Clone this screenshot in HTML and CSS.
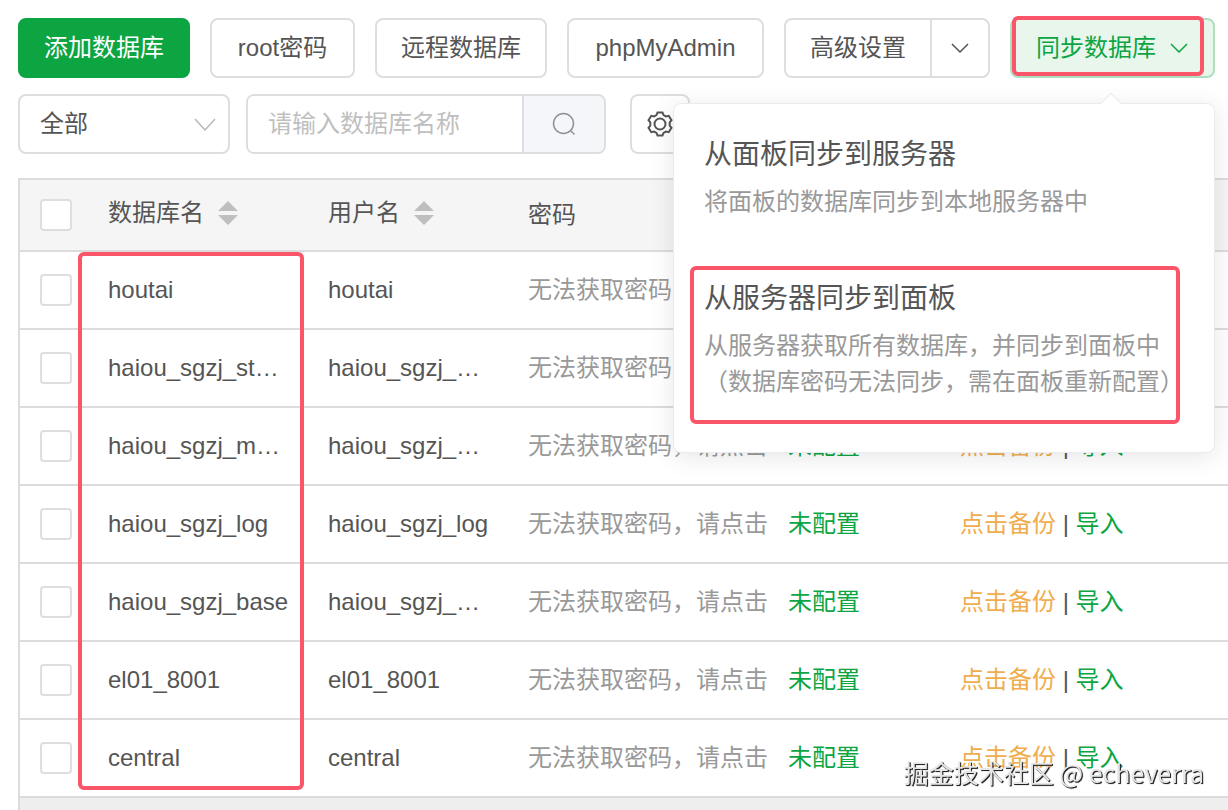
FILE: index.html
```html
<!DOCTYPE html>
<html lang="zh-CN">
<head>
<meta charset="utf-8">
<meta name="viewport" content="width=device-width, initial-scale=1">
<title>数据库</title>
<link rel="stylesheet" href="styles.css">
</head>
<body>
<main class="page">
  <div class="toolbar">
    <button class="btn btn-primary" type="button">添加数据库</button>
    <button class="btn btn-root" type="button">root密码</button>
    <button class="btn" type="button">远程数据库</button>
    <button class="btn btn-admin" type="button">phpMyAdmin</button>
    <div class="split">
      <button class="btn split-main" type="button">高级设置</button>
      <button class="btn split-toggle" type="button" aria-label="更多高级设置">
        <svg class="chevron" viewBox="0 0 18 10" aria-hidden="true"><path d="M1 1l8 8 8-8"/></svg>
      </button>
    </div>
    <div class="dropdown">
      <button class="btn btn-sync" type="button" aria-haspopup="true" aria-expanded="true">
        同步数据库
        <svg class="chevron" viewBox="0 0 18 10" aria-hidden="true"><path d="M1 1l8 8 8-8"/></svg>
      </button>
      <span class="mark mark-sync"></span>
      <div class="popover">
        <button class="option" type="button">
          <span class="option-title">从面板同步到服务器</span>
          <span class="option-desc">将面板的数据库同步到本地服务器中</span>
        </button>
        <button class="option" type="button">
          <span class="option-title">从服务器同步到面板</span>
          <span class="option-desc">从服务器获取所有数据库，并同步到面板中<br>（数据库密码无法同步，需在面板重新配置）</span>
          <span class="mark mark-option"></span>
        </button>
      </div>
    </div>
  </div>

  <div class="filters">
    <div class="select">
      <select aria-label="数据库类型"><option>全部</option></select>
      <svg class="select-arrow" viewBox="0 0 22 13" aria-hidden="true"><path d="M1 1l10 11 10-11"/></svg>
    </div>
    <div class="search">
      <input type="text" aria-label="数据库名称" placeholder="请输入数据库名称">
      <button class="search-btn" type="button" aria-label="搜索">
        <svg viewBox="0 0 24 24" aria-hidden="true"><circle cx="11.500" cy="11.500" r="10"/><path d="M18.500 18.500l4 4"/></svg>
      </button>
    </div>
    <button class="btn gear" type="button" aria-label="设置">
      <svg viewBox="0 0 26 26" aria-hidden="true"><path d="M9.500 4L10.500 1.500H15.500L16.500 4L19 5.400L21.700 4.800L24.500 9.200L22.700 11.400V14.600L24.500 16.800L21.700 21.200L19 20.600L16.500 22L15.500 24.500H10.500L9.500 22L7 20.600L4.300 21.200L1.500 16.800L3.300 14.600V11.400L1.500 9.200L4.300 4.800L7 5.400Z"/><circle cx="13" cy="13" r="5.500"/></svg>
    </button>
  </div>

  <div class="table-area">
    <table class="table">
      <colgroup><col class="c-check"><col class="c-name"><col class="c-user"><col class="c-pass"><col class="c-backup"></colgroup>
      <thead>
        <tr>
          <th><input class="check" type="checkbox" aria-label="全选"></th>
          <th><span class="sort">数据库名<svg viewBox="0 0 20 24" aria-hidden="true"><path d="M10 0l10 10H0zM0 14h20L10 24z"/></svg></span></th>
          <th><span class="sort">用户名<svg viewBox="0 0 20 24" aria-hidden="true"><path d="M10 0l10 10H0zM0 14h20L10 24z"/></svg></span></th>
          <th>密码</th>
          <th></th>
        </tr>
      </thead>
      <tbody>
        <tr><td><input class="check" type="checkbox" aria-label="houtai"></td><td>houtai</td><td>houtai</td><td><span class="muted">无法获取密码，请点击</span><a class="config" href="#">未配置</a></td><td><a class="backup" href="#">点击备份</a> | <a href="#">导入</a></td></tr>
        <tr><td><input class="check" type="checkbox" aria-label="haiou_sgzj_st…"></td><td>haiou_sgzj_st…</td><td>haiou_sgzj_…</td><td><span class="muted">无法获取密码，请点击</span><a class="config" href="#">未配置</a></td><td><a class="backup" href="#">点击备份</a> | <a href="#">导入</a></td></tr>
        <tr><td><input class="check" type="checkbox" aria-label="haiou_sgzj_m…"></td><td>haiou_sgzj_m…</td><td>haiou_sgzj_…</td><td><span class="muted">无法获取密码，请点击</span><a class="config" href="#">未配置</a></td><td><a class="backup" href="#">点击备份</a> | <a href="#">导入</a></td></tr>
        <tr><td><input class="check" type="checkbox" aria-label="haiou_sgzj_log"></td><td>haiou_sgzj_log</td><td>haiou_sgzj_log</td><td><span class="muted">无法获取密码，请点击</span><a class="config" href="#">未配置</a></td><td><a class="backup" href="#">点击备份</a> | <a href="#">导入</a></td></tr>
        <tr><td><input class="check" type="checkbox" aria-label="haiou_sgzj_base"></td><td>haiou_sgzj_base</td><td>haiou_sgzj_…</td><td><span class="muted">无法获取密码，请点击</span><a class="config" href="#">未配置</a></td><td><a class="backup" href="#">点击备份</a> | <a href="#">导入</a></td></tr>
        <tr><td><input class="check" type="checkbox" aria-label="el01_8001"></td><td>el01_8001</td><td>el01_8001</td><td><span class="muted">无法获取密码，请点击</span><a class="config" href="#">未配置</a></td><td><a class="backup" href="#">点击备份</a> | <a href="#">导入</a></td></tr>
        <tr><td><input class="check" type="checkbox" aria-label="central"></td><td>central</td><td>central</td><td><span class="muted">无法获取密码，请点击</span><a class="config" href="#">未配置</a></td><td><a class="backup" href="#">点击备份</a> | <a href="#">导入</a></td></tr>
      </tbody>
    </table>
    <span class="mark mark-names"></span>
    <div class="scroll-track"></div>
  </div>
</main>
<div class="watermark">掘金技术社区 @ echeverra</div>
</body>
</html>
```
FILE: styles.css
```css
* { box-sizing: border-box; }

body {
  margin: 0;
  background: #fff;
  color: #555;
  font: 24px/36px "Liberation Sans", "Noto Sans CJK SC", sans-serif;
}

button, input, select { font: inherit; color: inherit; margin: 0; }
a { color: #0ca542; text-decoration: none; }
svg { display: block; fill: none; stroke: currentColor; stroke-width: 2; }

.page {
  display: flex;
  flex-direction: column;
  min-height: 100vh;
  padding: 18px 0 0 18px;
  overflow: hidden;
}

.toolbar, .filters { display: flex; height: 60px; flex: none; white-space: nowrap; }
.toolbar { gap: 20px; }
.filters { gap: 24px; margin: 16px 0 24px; }

.btn {
  display: flex;
  align-items: center;
  justify-content: center;
  padding: 0 24px;
  border: 2px solid #dcdee0;
  border-radius: 8px;
  background: #fff;
}
.btn-primary { background: #0ca542; border-color: #0ca542; color: #fff; }
.btn-root { min-width: 145px; }
.btn-admin { min-width: 197px; }
.chevron { width: 18px; height: 10px; stroke-width: 1.5; }

.split { display: flex; }
.split-main { border-right: 0; border-radius: 8px 0 0 8px; }
.split-toggle { width: 60px; padding: 0; border-radius: 0 8px 8px 0; }

.dropdown { position: relative; display: flex; }
.btn-sync { gap: 14px; padding-right: 25px; background: #e9f6ec; border-color: #b0dfc0; color: #0ca542; }

.mark {
  position: absolute;
  border: 4px solid #fa5568;
  border-radius: 6px;
  pointer-events: none;
}
.mark-sync { inset: -2px 11px 2px 2px; }

.popover {
  position: absolute;
  z-index: 2;
  top: 85px;
  right: 0;
  display: flex;
  flex-direction: column;
  gap: 58px;
  width: 542px;
  padding: 30px 30px 52px;
  border: 1px solid #e9ebee;
  border-radius: 8px;
  background: #fff;
  box-shadow: 0 4px 24px rgba(0, 0, 0, .1);
}
.popover::before {
  content: "";
  position: absolute;
  top: -8px;
  right: 95px;
  width: 15px;
  height: 15px;
  border: solid #e9ebee;
  border-width: 1px 0 0 1px;
  background: #fff;
  transform: rotate(45deg);
}
.option {
  position: relative;
  padding: 0;
  border: 0;
  background: none;
  text-align: left;
  text-spacing-trim: space-all;
}
.option-title, .option-desc { display: block; }
.option-title { margin-bottom: 8px; font-size: 28px; line-height: 42px; }
.option-desc { color: #999; }
.mark-option { inset: -12px 4px -24px -14px; }

.select { display: grid; align-items: center; width: 212px; margin-right: -8px; }
.select select {
  grid-area: 1 / 1;
  height: 60px;
  padding: 0 20px;
  border: 2px solid #dcdee0;
  border-radius: 8px;
  background: #fff;
  appearance: none;
}
.select-arrow {
  grid-area: 1 / 1;
  justify-self: end;
  width: 22px;
  height: 13px;
  margin-right: 14px;
  color: #b5b8bd;
  stroke-width: 1.5;
  pointer-events: none;
}

.search { display: flex; width: 360px; border: 2px solid #dcdee0; border-radius: 8px; overflow: hidden; }
.search input { flex: 1; min-width: 0; padding: 0 20px; border: 0; background: #fff; }
.search input::placeholder { color: #bfbfbf; opacity: 1; }
.search-btn {
  display: grid;
  place-items: center;
  width: 82px;
  padding: 0;
  border: 0;
  border-left: 2px solid #dcdee0;
  background: #f4f6fa;
  color: #8f9299;
}
.search-btn svg { width: 24px; height: 24px; stroke-width: 1.5; }
.gear { width: 60px; padding: 0; }
.gear svg { width: 26px; height: 26px; flex: none; }

.table-area {
  position: relative;
  display: flex;
  flex: 1;
  flex-direction: column;
  border: solid #dcdcdc;
  border-width: 2px 0 0 2px;
}
.table { width: 100%; min-width: 1208px; table-layout: fixed; border-collapse: separate; border-spacing: 0; }
.c-check { width: 68px; }
.c-name { width: 220px; }
.c-user { width: 200px; }
.c-pass { width: 432px; }
th, td {
  padding: 0 16px 0 20px;
  border-bottom: 2px solid #dcdcdc;
  font-weight: 400;
  text-align: left;
  vertical-align: middle;
  white-space: nowrap;
}
th { height: 72px; background: #f5f5f5; }
td { height: 78px; }
.sort { display: flex; align-items: center; gap: 14px; padding-bottom: 4px; }
.sort svg { width: 20px; height: 24px; fill: #bfbfbf; stroke: none; }
.check {
  display: block;
  width: 32px;
  height: 32px;
  border: 2px solid #dcdee0;
  border-radius: 4px;
  background: #fff;
  appearance: none;
}
.muted { margin-right: 20px; color: #999; }
.backup { color: #f0ad4e; }
.mark-names { top: 72px; left: 58px; width: 226px; height: 538px; }
.scroll-track { flex: 1; min-height: 12px; background: #eee; }

.watermark {
  position: fixed;
  right: 24px;
  bottom: 20px;
  z-index: 3;
  color: #e6e6e6;
  font-family: "Noto Sans CJK SC", sans-serif;
  font-size: 25px;
  text-shadow: 1px 1px 1px #222, 1px 1px 0 #444;
}
```
